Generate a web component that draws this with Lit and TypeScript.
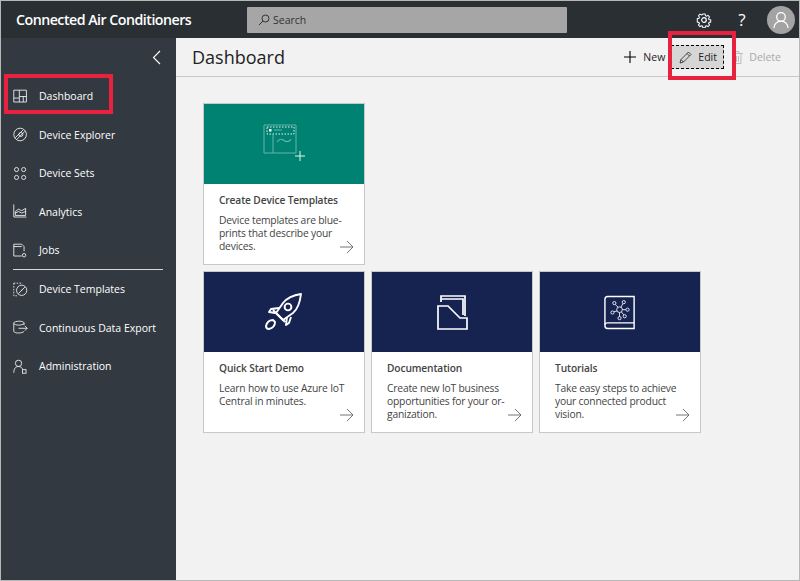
import { LitElement, html, css, svg } from "lit";
import { customElement } from "lit/decorators.js";

const navIcons: Record<string, unknown> = {
  dash: svg`<path d="M1 1h16v15H1zM8 1v15M8 9h9M1 11h7M13 9v7"/>`,
  explorer: svg`<circle cx="9" cy="9" r="8"/><path d="M3 13 13 3M5 15 15 5"/><circle cx="10" cy="9" r="2.5"/>`,
  sets: svg`<circle cx="4.5" cy="4" r="2.6"/><circle cx="13.5" cy="4" r="2.6"/><circle cx="4.5" cy="14" r="2.6"/><circle cx="13.5" cy="14" r="2.6"/>`,
  analytics: svg`<path d="M1 0v16h16M3 14V9l4-3 4 2 5-3v9z"/><path d="M3 11l4-2 4 2 5-2"/>`,
  jobs: svg`<path d="M11 16H1V1h10l3 3v6M1 4h10"/><circle cx="14" cy="15" r="2.2"/>`,
  templates: svg`<path stroke-dasharray="2 1.6" d="M1 1h11M1 1v16h5"/><circle cx="11" cy="10" r="6.5"/><path d="M7 14l8-8M10 11l3-3"/>`,
  exportI: svg`<path d="M14 6V3c0-1-3-2-6-2S1 2 1 3v11c0 1 3 2 6 2s6-1 7-2M1 4c1 1 3 2 6 2s6-1 7-2M7 10h11M15 7l3 3-3 3"/>`,
  admin: svg`<circle cx="7" cy="5" r="4"/><path d="M1 17c0-5 2-8 6-8 2 0 4 1 5 3"/><rect x="12" y="13" width="4.5" height="4.5"/>`,
};

const nav = [
  ["dash", "Dashboard"],
  ["explorer", "Device Explorer"],
  ["sets", "Device Sets"],
  ["analytics", "Analytics"],
  ["jobs", "Jobs"],
  ["templates", "Device Templates"],
  ["exportI", "Continuous Data Export"],
  ["admin", "Administration"],
];

const cardArt: Record<string, unknown> = {
  template: svg`<svg width="46" height="44" viewBox="-2 0 46 44" fill="none" stroke="#66b3a8" stroke-width="1">
    <path d="M1 3h32v28H1z"/><path stroke="#e6f3f0" stroke-dasharray="1.500 1.500" d="M4 5h27v7H4z"/><path d="M10 12v19"/>
    <rect x="6" y="7" width="2.500" height="2.500" fill="#fff" stroke="none"/><path d="M11 8h8"/>
    <path d="M14 20c3-4 5-3 7-1.500s4 2 7-1" stroke-width="1.200"/>
    <path stroke="#e6f3f0" d="M37 29v10M32 34h10"/></svg>`,
  rocket: svg`<svg width="38" height="38" viewBox="0 0 38 38" fill="none" stroke="#fff" stroke-width="1.900" stroke-linejoin="round">
    <path d="M36 1c-7 1-14 4-18 9L11 20l7 7 10-7c5-4 7-11 8-19z"/><circle cx="23" cy="14" r="3.400"/>
    <path d="M14 15 6 16l-2 3 6 1M22 24l-1 8 3-2 2-6M8 17l12 12"/>
    <path d="M8 27c-3 0-6 2-7 6 0 2 1 3 3 3 4-1 6-4 6-7z"/></svg>`,
  docs: svg`<svg width="31" height="35" viewBox="0 0 31 35" fill="none" stroke="#fff" stroke-width="1.700">
    <path d="M4 7V1h24v20"/><path d="M4 4h22v16"/><path d="M1 34V11h10l12 12h7v11z"/></svg>`,
  book: svg`<svg width="32" height="35" viewBox="0 0 34 36" fill="none" stroke="#fff" stroke-width="1.500">
    <path d="M4 1h28v34H4c-2 0-3-1-3-3V4c0-2 1-3 3-3z"/><path d="M1 31c0-1 1-2 3-2h28"/>
    <g stroke-width=".9"><circle cx="16.500" cy="15" r="3"/><circle cx="11" cy="8" r="1.700"/><circle cx="21" cy="7" r="1.700"/><circle cx="25" cy="15" r="1.700"/><circle cx="22" cy="22" r="1.700"/><circle cx="16.500" cy="24" r="1.700"/><circle cx="9" cy="18" r="1.700"/>
    <path d="M12 9.500l3 3M20 8.500l-2 4M23.300 15h-3.800M21 20.500l-2.500-3M16.500 22.300V18M10.500 17.300l3.300-1"/></g></svg>`,
};

const cards = [
  ["teal", "template", "Create Device Templates", ["Device templates are blue-", "prints that describe your", "devices."]],
  ["navy", "rocket", "Quick Start Demo", ["Learn how to use Azure IoT", "Central in minutes."]],
  ["navy", "docs", "Documentation", ["Create new IoT business", "opportunities for your or-", "ganization."]],
  ["navy", "book", "Tutorials", ["Take easy steps to achieve", "your connected product", "vision."]],
] as const;

@customElement("app-root")
export class AppRoot extends LitElement {
  static styles = css`
    :host {
      display: block;
      width: 800px;
      height: 581px;
      position: relative;
      overflow: hidden;
      font-family: "Open Sans", "Noto Sans", sans-serif;
    }
    .frame {
      box-sizing: border-box;
      width: 800px;
      height: 581px;
      border: 1px solid #b7b7b7;
      display: grid;
      grid-template-columns: 175px 1fr;
      grid-template-rows: 37px 1fr;
      background: #f2f2f2;
    }
    .top {
      grid-column: 1 / 3;
      background: #2a2f34;
      display: flex;
      align-items: center;
      color: #fff;
    }
    .brand {
      width: 246px;
      padding-left: 15px;
      box-sizing: border-box;
      font-size: 14.2px;
      font-weight: 600;
      letter-spacing: -0.5px;
      white-space: nowrap;
    }
    .search {
      width: 320px;
      height: 26px;
      background: #a6a6a6;
      border-radius: 1px;
      display: flex;
      align-items: center;
      gap: 3px;
      padding-left: 11px;
      box-sizing: border-box;
      font-size: 10.5px;
      color: #333;
    }
    .top-right {
      margin-left: auto;
      display: flex;
      align-items: center;
      padding-right: 4px;
    }
    .gear {
      display: block;
      margin-right: 21px;
    }
    .help {
      font-size: 17px;
      width: 18px;
      margin-right: 16px;
      text-align: center;
      line-height: 20px;
    }
    .avatar {
      width: 28px;
      height: 28px;
      border-radius: 50%;
      background: #a3a3a3;
      display: flex;
      align-items: center;
      justify-content: center;
    }
    .side {
      background: #323941;
      color: #fff;
      display: flex;
      flex-direction: column;
    }
    .collapse {
      height: 39px;
      display: flex;
      align-items: center;
      justify-content: flex-end;
      padding-right: 15px;
      flex: none;
    }
    .item {
      height: 38.5px;
      flex: none;
      display: flex;
      align-items: center;
      gap: 11px;
      padding-left: 12px;
      font-size: 10.5px;
      white-space: nowrap;
    }
    .item svg {
      flex: none;
      fill: none;
      stroke: #f2f2f2;
      stroke-width: 1.100;
    }
    .rule {
      height: 1px;
      background: #d8d8d8;
      margin: -0.7px 13px 0 12px;
      flex: none;
    }
    .main {
      display: flex;
      flex-direction: column;
      min-width: 0;
    }
    .bar {
      height: 38px;
      flex: none;
      border-bottom: 1px solid #c8c8c8;
      display: flex;
      align-items: center;
      padding-left: 16px;
    }
    h1 {
      margin: 0;
      font-size: 18px;
      font-weight: 400;
      color: #222;
    }
    .actions {
      margin-left: auto;
      display: flex;
      align-items: center;
      font-size: 10.5px;
      color: #222;
      padding-right: 18px;
    }
    .act {
      display: flex;
      align-items: center;
      gap: 7px;
      height: 24px;
      box-sizing: border-box;
    }
    .new {
      margin-right: 6px;
    }
    .edit {
      width: 53px;
      background: #d6d6d6;
      border: 1px dashed #000;
      padding-left: 7px;
      gap: 6px;
      margin-right: 8px;
    }
    .delete {
      gap: 6px;
      color: #a9a9a9;
    }
    .grid {
      padding: 26px 0 0 27px;
      display: grid;
      grid-template-columns: repeat(3, 162px);
      grid-template-rows: repeat(2, 162px);
      gap: 6px;
    }
    .card {
      box-sizing: border-box;
      border: 1px solid #c8c8c8;
      background: #fff;
      position: relative;
      display: flex;
      flex-direction: column;
    }
    .card.first {
      grid-column: 1 / 4;
      width: 162px;
    }
    .art {
      height: 80px;
      flex: none;
      display: flex;
      align-items: center;
      justify-content: center;
    }
    .teal {
      background: #008272;
    }
    .navy {
      background: #162350;
    }
    .body {
      padding: 9px 8px 0 15px;
    }
    .title {
      font-size: 10.2px;
      font-weight: 600;
      letter-spacing: -0.12px;
      color: #444;
      line-height: 15px;
      margin-bottom: 6px;
      white-space: nowrap;
    }
    .line {
      font-size: 10.3px;
      letter-spacing: -0.2px;
      color: #444;
      line-height: 13px;
      white-space: nowrap;
    }
    .arrow {
      position: absolute;
      right: 10px;
      bottom: 10px;
      display: block;
    }
    .mark {
      position: absolute;
      box-sizing: border-box;
      border: 4px solid #e8213f;
      pointer-events: none;
    }
    .mark.a {
      left: 4px;
      top: 74px;
      width: 109px;
      height: 40px;
    }
    .mark.b {
      left: 668px;
      top: 31px;
      width: 68px;
      height: 49px;
    }
  `;

  private arrow() {
    return html`<svg class="arrow" width="14" height="14" viewBox="0 0 14 14" fill="none" stroke="#666" stroke-width=".9"><path d="M0 7h13M7 1l6 6-6 6"/></svg>`;
  }

  render() {
    return html`
      <div class="frame">
        <header class="top">
          <div class="brand">Connected Air Conditioners</div>
          <div class="search">
            <svg width="12" height="12" viewBox="0 0 12 12" fill="none" stroke="#333" stroke-width="1"><circle cx="7.500" cy="4.500" r="3.500"/><path d="M5 7 1 11"/></svg>
            <span>Search</span>
          </div>
          <div class="top-right">
            <svg class="gear" width="16" height="16" viewBox="0 0 16 16" fill="none" stroke="#fff" stroke-width="1.200"><circle cx="8" cy="8" r="2.300"/><path d="M6.700 1h2.600l.4 2 1.300.6 1.800-1 1.700 1.900-1.100 1.700.5 1.300 2 .5v2.400l-2 .5-.5 1.300 1.100 1.700-1.700 1.800-1.800-1-1.300.5-.4 2H6.700l-.4-2-1.300-.5-1.800 1-1.700-1.800 1.100-1.700-.5-1.300-2-.5V6.500l2-.5.5-1.300-1.100-1.700 1.700-1.900 1.800 1 1.300-.6z" transform="translate(1.200 1.200) scale(.85)"/></svg>
            <span class="help">?</span>
            <div class="avatar">
              <svg width="16" height="18" viewBox="0 0 16 18" fill="none" stroke="#fff" stroke-width="1.300"><circle cx="8" cy="6" r="4.300"/><path d="M1 17c0-4 3-6.800 7-6.800s7 2.800 7 6.800"/></svg>
            </div>
          </div>
        </header>
        <nav class="side">
          <div class="collapse">
            <svg width="9" height="15" viewBox="0 0 9 15" fill="none" stroke="#fff" stroke-width="1.100"><path d="M8 1 1.500 7.500 8 14"/></svg>
          </div>
          ${nav.map(
            ([k, label]) => html`
              <div class="item">
                <svg width="15" height="15" viewBox="0 0 19 18">${navIcons[k]}</svg>
                <span>${label}</span>
              </div>
              ${k === "jobs" ? html`<div class="rule"></div>` : ""}
            `
          )}
        </nav>
        <main class="main">
          <div class="bar">
            <h1>Dashboard</h1>
            <div class="actions">
              <div class="act new">
                <svg width="12" height="12" viewBox="0 0 12 12" stroke="#000" stroke-width="1.100"><path d="M6 0v12M0 6h12"/></svg>
                <span>New</span>
              </div>
              <div class="act edit">
                <svg width="13" height="13" viewBox="0 0 13 13" fill="none" stroke="#333" stroke-width=".9"><path d="M1 12l1-3.500L9.500 1 12 3.500 4.500 11zM8 2.500 10.500 5M2 8.500 4.500 11"/></svg>
                <span>Edit</span>
              </div>
              <div class="act delete">
                <svg width="11" height="13" viewBox="0 0 11 13" fill="none" stroke="#bdbdbd" stroke-width="1"><path d="M0 2.500h11M2 2.500V12.500h7V2.500M4 .5h3v2M4.500 5v6M6.500 5v6"/></svg>
                <span>Delete</span>
              </div>
            </div>
          </div>
          <div class="grid">
            ${cards.map(
              ([color, art, title, lines], i) => html`
                <article class="card ${i === 0 ? "first" : ""}">
                  <div class="art ${color}">${cardArt[art]}</div>
                  <div class="body">
                    <div class="title">${title}</div>
                    ${lines.map((l) => html`<div class="line">${l}</div>`)}
                  </div>
                  ${this.arrow()}
                </article>
              `
            )}
          </div>
        </main>
      </div>
      <div class="mark a"></div>
      <div class="mark b"></div>
    `;
  }
}
